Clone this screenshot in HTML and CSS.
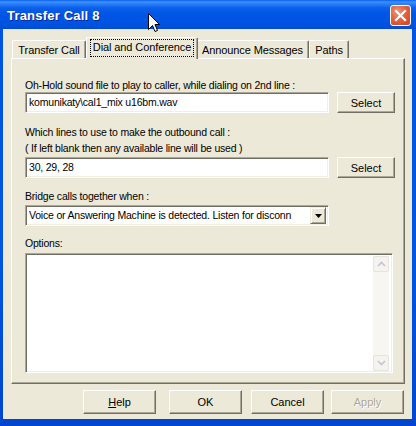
FILE: index.html
```html
<!DOCTYPE html>
<html>
<head>
<meta charset="utf-8">
<link rel="stylesheet" href="styles.css">
</head>
<body>
<div class="window">
  <div class="titlebar">
    <span class="title">Transfer Call 8</span>
    <div class="close">
      <svg width="13" height="13" viewBox="0 0 13 13"><path d="M2 2 L11 11 M11 2 L2 11" stroke="#fff" stroke-width="2.2" stroke-linecap="square"/></svg>
    </div>
  </div>
  <div class="client">
    <div class="tabs">
      <div class="tab t1">Transfer Call</div>
      <div class="tab active t2"><span class="focus">Dial and Conference</span></div>
      <div class="tab t3">Announce Messages</div>
      <div class="tab t4">Paths</div>
    </div>
    <div class="panel">
      <div class="label l1">Oh-Hold sound file to play to caller, while dialing on 2nd line :</div>
      <div class="row">
        <div class="field">komunikaty\cal1_mix u16bm.wav</div>
        <div class="btn select">Select</div>
      </div>
      <div class="label l2">Which lines to use to make the outbound call :</div>
      <div class="label l3">( If left blank then any available line will be used )</div>
      <div class="row">
        <div class="field">30, 29, 28</div>
        <div class="btn select">Select</div>
      </div>
      <div class="label l4">Bridge calls together when :</div>
      <div class="combo">
        <div class="combo-text">Voice or Answering Machine is detected. Listen for disconn</div>
        <div class="combo-btn"><svg width="7" height="4" viewBox="0 0 7 4"><path d="M0 0 H7 L3.5 4 Z" fill="#000"/></svg></div>
      </div>
      <div class="label l5">Options:</div>
      <div class="memo">
        <div class="memo-body"></div>
        <div class="scroll">
          <div class="sbtn"><svg width="9" height="6" viewBox="0 0 9 6"><path d="M1 5 L4.5 1.5 L8 5" fill="none" stroke="#C3C6CF" stroke-width="1.6"/></svg></div>
          <div class="strack"></div>
          <div class="sbtn"><svg width="9" height="6" viewBox="0 0 9 6"><path d="M1 1 L4.5 4.5 L8 1" fill="none" stroke="#C3C6CF" stroke-width="1.6"/></svg></div>
        </div>
      </div>
    </div>
    <div class="buttons">
      <div class="btn dlg b-help"><span class="u">H</span>elp</div>
      <div class="btn dlg b-ok">OK</div>
      <div class="btn dlg b-cancel">Cancel</div>
      <div class="btn dlg b-apply disabled">Apply</div>
    </div>
  </div>
  <svg class="cursor" width="12" height="20" viewBox="0 0 12 20"><path d="M0.5 0.5 L0.5 16.5 L4.5 12.5 L7 18.5 L9.5 17.5 L7 11.5 L11.5 11.5 Z" fill="#fff" stroke="#000" stroke-width="1"/></svg>
</div>
</body>
</html>
```

FILE: styles.css
```css
* { box-sizing: border-box; }
html, body { margin: 0; padding: 0; }
body {
  font-family: "Liberation Sans", Arial, sans-serif;
  font-size: 10.5px;
  letter-spacing: -0.2px;
  color: #000;
  background: #fff;
}
.window {
  position: relative;
  width: 416px;
  height: 426px;
  display: flex;
  flex-direction: column;
  background: linear-gradient(to bottom, #0054E3 0%, #0055E5 60%, #0046CF 100%);
}
.titlebar {
  height: 29px;
  display: flex;
  align-items: center;
  padding-left: 7px;
  padding-right: 5px;
  background: linear-gradient(to bottom, #0A60EE 0px, #3D93FF 2px, #2A7EF8 4px, #0A5FEB 8px, #0055E5 14px, #0054E3 22px, #0050DC 27px, #004BD2 29px);
}
.title {
  flex: 1;
  color: #fff;
  font-weight: bold;
  font-size: 13px;
  letter-spacing: 0.2px;
  font-family: "Liberation Sans", Arial, sans-serif;
  text-shadow: 1px 1px 0 #0A2C9A;
  padding-top: 1px;
}
.close {
  width: 21px;
  height: 21px;
  border: 1px solid #fff;
  border-radius: 3px;
  background: radial-gradient(circle at 35% 30%, #F0957A 0%, #E2623E 45%, #CC4521 100%);
  display: flex;
  align-items: center;
  justify-content: center;
  margin-top: 1px;
}
.client {
  flex: 1;
  margin: 0 4px 7px 3px;
  background: #ECE9D8;
  display: flex;
  flex-direction: column;
}
.tabs {
  display: flex;
  align-items: flex-end;
  height: 29px;
  padding-left: 9px;
  position: relative;
  z-index: 2;
}
.tab {
  height: 18px;
  background: #ECE9D8;
  border-top: 1px solid #fff;
  border-left: 1px solid #fff;
  border-right: 1px solid #716F64;
  box-shadow: inset -1px 0 0 #ACA899;
  border-radius: 2px 2px 0 0;
  display: flex;
  align-items: center;
  justify-content: center;
  padding-top: 1px;
  white-space: nowrap;
  font-size: 11px;
  letter-spacing: -0.1px;
}
.t1 { width: 74px; }
.t2 { width: 112px; }
.t3 { width: 113px; }
.t4 { width: 40px; }
.tab.active {
  height: 22px;
  margin-left: 0;
  margin-right: -2px;
  margin-bottom: -1px;
  position: relative;
  z-index: 3;
  align-items: flex-start;
  padding-top: 2px;
}
.focus {
  outline: 1px dotted #000;
  outline-offset: 0;
  padding: 1px 2px 2px 2px;
  line-height: 13px;
}
.panel {
  margin-left: 8px;
  width: 394px;
  height: 326px;
  border-top: 1px solid #fff;
  border-left: 1px solid #fff;
  border-right: 1px solid #716F64;
  border-bottom: 1px solid #716F64;
  box-shadow: inset -1px -1px 0 #ACA899;
  padding: 19px 0 0 13px;
  display: flex;
  flex-direction: column;
}
.label {
  line-height: 14px;
  height: 14px;
  white-space: nowrap;
}
.l2 { margin-top: 12px; }
.l3 { margin-top: 2px; }
.l4 { margin-top: 11px; }
.l5 { margin-top: 10px; }
.row {
  display: flex;
}
.l3 + .row { margin-top: 2px; }
.field {
  width: 304px;
  height: 21px;
  background: #fff;
  border-top: 1px solid #ACA899;
  border-left: 1px solid #ACA899;
  border-right: 1px solid #fff;
  border-bottom: 1px solid #fff;
  box-shadow: inset 1px 1px 0 #716F64, inset -1px -1px 0 #F1EFE2;
  padding-left: 3px;
  line-height: 19px;
  white-space: nowrap;
}
.btn {
  background: #ECE9D8;
  border-top: 1px solid #fff;
  border-left: 1px solid #fff;
  border-right: 1px solid #716F64;
  border-bottom: 1px solid #716F64;
  box-shadow: inset -1px -1px 0 #ACA899;
  display: flex;
  align-items: center;
  justify-content: center;
  font-size: 11px;
  letter-spacing: 0;
}
.select {
  width: 58px;
  height: 21px;
  margin-left: 8px;
}
.combo {
  margin-top: 2px;
  width: 304px;
  height: 21px;
  background: #fff;
  border-top: 1px solid #ACA899;
  border-left: 1px solid #ACA899;
  border-right: 1px solid #fff;
  border-bottom: 1px solid #fff;
  box-shadow: inset 1px 1px 0 #716F64, inset -1px -1px 0 #F1EFE2;
  display: flex;
  padding: 1px 2px 1px 1px;
}
.combo-text {
  flex: 1;
  padding-left: 2px;
  line-height: 17px;
  white-space: nowrap;
  overflow: hidden;
}
.combo-btn {
  width: 16px;
  height: 17px;
  background: #ECE9D8;
  border-top: 1px solid #F1EFE2;
  border-left: 1px solid #F1EFE2;
  border-right: 1px solid #716F64;
  border-bottom: 1px solid #716F64;
  box-shadow: inset 1px 1px 0 #fff, inset -1px -1px 0 #ACA899;
  display: flex;
  align-items: center;
  justify-content: center;
}
.memo {
  margin-top: 3px;
  width: 368px;
  height: 120px;
  background: #fff;
  border-top: 1px solid #ACA899;
  border-left: 1px solid #ACA899;
  border-right: 1px solid #fff;
  border-bottom: 1px solid #fff;
  box-shadow: inset 1px 1px 0 #716F64, inset -1px -1px 0 #F1EFE2;
  display: flex;
  padding: 2px 2px 1px 2px;
}
.memo-body { flex: 1; }
.scroll {
  width: 16px;
  background: #F7F6F1;
  display: flex;
  flex-direction: column;
  margin-right: 1px;
}
.sbtn {
  height: 16px;
  border: 1px solid #E6E4DC;
  border-radius: 2px;
  background: #F4F3EE;
  display: flex;
  align-items: center;
  justify-content: center;
}
.strack { flex: 1; }
.buttons {
  display: flex;
  margin-top: 6px;
  padding-left: 80px;
}
.dlg {
  width: 73px;
  height: 24px;
}
.b-ok { margin-left: 13px; }
.b-cancel { margin-left: 9px; }
.b-apply { margin-left: 7px; }
.u { text-decoration: underline; }
.disabled {
  color: #ACA899;
  text-shadow: 1px 1px 0 #fff;
}
.cursor {
  position: absolute;
  left: 148px;
  top: 13px;
}
```
